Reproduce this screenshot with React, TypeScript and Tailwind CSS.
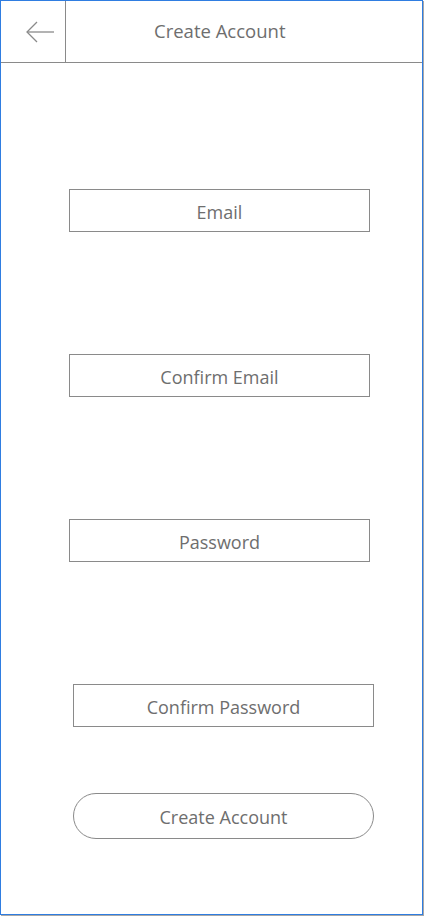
const fields = [
  { label: 'Email', offset: 'ml-[68px]' },
  { label: 'Confirm Email', offset: 'ml-[68px]' },
  { label: 'Password', offset: 'ml-[68px]' },
  { label: 'Confirm Password', offset: 'ml-[72px]' },
];

export default function App() {
  return (
    <div className="h-[917px] w-[425px] bg-white font-['Open_Sans',sans-serif] text-[#6e6e6e]">
      <div className="flex h-[915px] w-[423px] flex-col border border-[#2f7de1] shadow-[1px_1px_0_#a8a8a8]">
        {/* header */}
        <div className="flex h-[62px] border-b border-[#8a8a8a]">
          <button className="flex w-[65px] items-center justify-center border-r border-[#8a8a8a] pl-[12px]">
            <svg width="29" height="22" viewBox="0 0 29 22" fill="none" stroke="#8a8a8a" strokeWidth="1.3">
              <path d="M2 11h27" />
              <path d="M12 1L2 11l10 10" />
            </svg>
          </button>
          <div className="flex flex-1 items-center pb-[1px] pl-[88px] text-[18.5px]">Create Account</div>
        </div>

        {/* form */}
        <div className="flex flex-col pt-[126px]">
          {fields.map((f, i) => (
            <div
              key={f.label}
              className={`${f.offset} ${i > 0 ? 'mt-[122px]' : ''} flex h-[43px] w-[301px] items-center justify-center border border-[#8a8a8a] pt-[3px] text-[18px]`}
            >
              {f.label}
            </div>
          ))}
          <button className="ml-[72px] mt-[66px] flex h-[46px] w-[301px] items-center justify-center rounded-full border border-[#8a8a8a] pt-[3px] text-[18px]">
            Create Account
          </button>
        </div>
      </div>
    </div>
  );
}
